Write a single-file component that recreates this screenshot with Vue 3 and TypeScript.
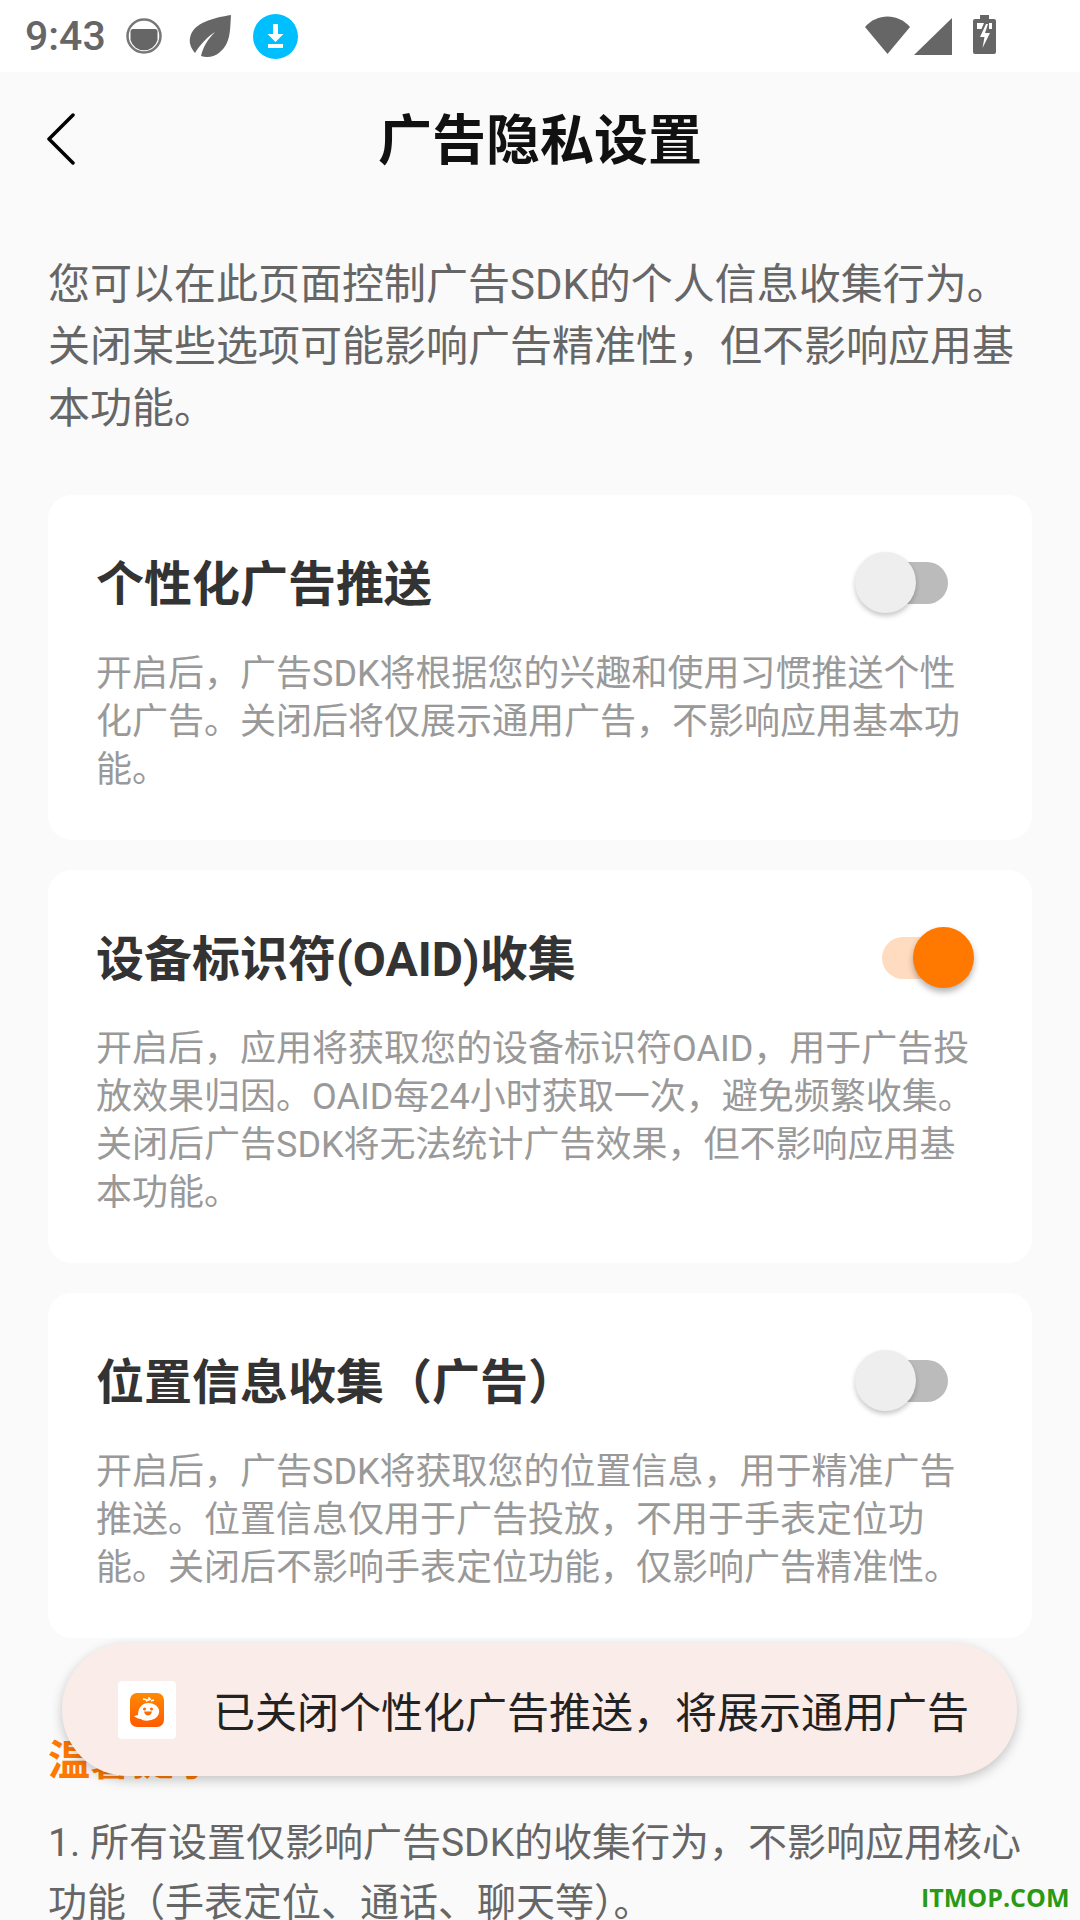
<script setup lang="ts">
import { ref } from "vue";
import type { Ref } from "vue";

interface option {
  readonly id: number;
  readonly title: string;
  readonly desc: string;
  on: boolean;
}

const options: Ref<option[]> = ref([
  {
    id: 1,
    title: "个性化广告推送",
    desc: "开启后，广告SDK将根据您的兴趣和使用习惯推送个性化广告。关闭后将仅展示通用广告，不影响应用基本功能。",
    on: false,
  },
  {
    id: 2,
    title: "设备标识符(OAID)收集",
    desc: "开启后，应用将获取您的设备标识符OAID，用于广告投放效果归因。OAID每24小时获取一次，避免频繁收集。关闭后广告SDK将无法统计广告效果，但不影响应用基本功能。",
    on: true,
  },
  {
    id: 3,
    title: "位置信息收集（广告）",
    desc: "开启后，广告SDK将获取您的位置信息，用于精准广告推送。位置信息仅用于广告投放，不用于手表定位功能。关闭后不影响手表定位功能，仅影响广告精准性。",
    on: false,
  },
]);

function toggle(item: option): void {
  item.on = !item.on;
}
</script>

<template>
  <div class="page">
    <div class="status">
      <span class="time">9:43</span>
      <svg class="ic-round" width="36" height="36" viewBox="0 0 36 36">
        <circle cx="18" cy="18" r="16.500" fill="none" stroke="#777" stroke-width="2.500" />
        <path d="M4.500 13.500q0-2.500 2.500-2.500h22q2.500 0 2.500 2.500V22a14 14 0 0 1-27 0z" fill="#666" />
      </svg>
      <svg class="ic-leaf" width="42" height="43" viewBox="0 0 42 43">
        <path d="M42 0C41 14 42 28 31 37 26 42 18 43 12 41 14 32 19 24 26 17 18 22 11 30 6 38 2 33 0 28 1 23 4 7 25 3 42 0z" fill="#666" />
      </svg>
      <svg class="ic-down" width="45" height="45" viewBox="0 0 45 45">
        <circle cx="22.500" cy="22.500" r="22.500" fill="#00bfff" />
        <path d="M20 10h5v10h5.500L22.500 28l-8-8H20z" fill="#fff" />
        <rect x="15" y="30" width="15" height="4" fill="#fff" />
      </svg>
      <span class="grow"></span>
      <svg class="ic-wifi" width="45" height="38" viewBox="0 0 45 38">
        <path d="M0 11C12 -3 33 -3 45 11L22.500 38z" fill="#666" />
      </svg>
      <svg class="ic-signal" width="38" height="37" viewBox="0 0 38 37">
        <path d="M38 0V37H0z" fill="#666" />
      </svg>
      <svg class="ic-batt" width="23" height="39" viewBox="0 0 23 39">
        <path d="M7 0h9v4h5q2 0 2 2v31q0 2-2 2H2q-2 0-2-2V6q0-2 2-2h5z" fill="#666" />
        <path d="M4 8h7l-2.500 6H4zM16 8h3v6h-3z" fill="#fff" />
        <path d="M13 9 7 22h4.500L9.500 33 17 18h-5l3-9z" fill="#fff" />
      </svg>
    </div>

    <div class="head">
      <svg class="back" width="28" height="52" viewBox="0 0 28 52">
        <path d="M26 2 2 26l24 24" fill="none" stroke="#000" stroke-width="3.500" stroke-linecap="round" stroke-linejoin="round" />
      </svg>
      <h1 class="title">广告隐私设置</h1>
    </div>

    <div class="body">
      <p class="intro">您可以在此页面控制广告SDK的个人信息收集行为。关闭某些选项可能影响广告精准性，但不影响应用基本功能。</p>

      <div class="card" v-for="item in options" :key="item.id">
        <div class="row">
          <span class="card-title">{{ item.title }}</span>
          <div class="switch" :class="{ on: item.on }" @click="toggle(item)">
            <span class="track"></span>
            <span class="thumb"></span>
          </div>
        </div>
        <p class="desc">{{ item.desc }}</p>
      </div>

      <h2 class="tip-title">温馨提示</h2>
      <p class="tip">1. 所有设置仅影响广告SDK的收集行为，不影响应用核心功能（手表定位、通话、聊天等）。</p>
    </div>

    <div class="toast">
      <div class="toast-icon">
        <svg width="34" height="34" viewBox="0 0 34 34">
          <defs>
            <linearGradient id="whale" x1="0" y1="0" x2="0" y2="1">
              <stop offset="0" stop-color="#ff8a00" />
              <stop offset="1" stop-color="#ff5a00" />
            </linearGradient>
          </defs>
          <rect width="34" height="34" rx="7" fill="url(#whale)" />
          <path d="M4 23l4-1c0-7 4-12 10-12 6 0 10 3 11 7 1 5-3 9-8 10-4 1-8 1-10-1-2 0-5-1-7-3z" fill="#fff" />
          <path d="M13 6l5 1M19 4v3M16 8l5-2M21 8l3-1" stroke="#fff" stroke-width="1.500" fill="none" />
          <circle cx="14.500" cy="16" r="1.500" fill="#ff6a00" />
          <circle cx="21.500" cy="16" r="1.500" fill="#ff6a00" />
          <path d="M14 18.500h8q-1 4-4 4t-4-4z" fill="#ff6a00" />
        </svg>
      </div>
      <span class="toast-text">已关闭个性化广告推送，将展示通用广告</span>
    </div>

    <span class="mark">ITMOP.COM</span>
  </div>
</template>

<style>
html,
body {
  margin: 0;
  background: #fafafa;
}
</style>

<style scoped>
.page {
  position: relative;
  width: 1080px;
  height: 1920px;
  overflow: hidden;
  background: #fafafa;
  font-family: Roboto, "Noto Sans CJK SC", sans-serif;
}

.status {
  height: 72px;
  background: #fff;
  display: flex;
  align-items: center;
  box-sizing: border-box;
  padding: 0 84px 0 25px;
}

.time {
  font-size: 41px;
  font-weight: 500;
  color: #666;
  margin-right: 20px;
}

.ic-leaf {
  margin-left: 27px;
}

.ic-down {
  margin-left: 22px;
}

.grow {
  flex: 1;
}

.ic-wifi {
  margin-bottom: 2px;
}

.ic-signal {
  margin-left: 4px;
}

.ic-batt {
  margin-left: 21px;
  margin-bottom: 3px;
}

.head {
  position: relative;
  height: 136px;
  display: flex;
  align-items: center;
  justify-content: center;
}

.back {
  position: absolute;
  left: 47px;
  top: 41px;
}

.title {
  margin: 0;
  padding-bottom: 7px;
  font-size: 54px;
  font-weight: 700;
  color: #111;
}

.body {
  padding: 46px 48px 0;
}

.intro {
  margin: 0 0 55px;
  font-size: 42px;
  line-height: 62px;
  color: #666;
}

.card {
  background: #fff;
  border-radius: 24px;
  padding: 57px 48px 46px;
  margin-bottom: 30px;
}

.row {
  display: flex;
  align-items: center;
  justify-content: space-between;
}

.card-title {
  font-size: 48px;
  line-height: 58px;
  padding-top: 4px;
  font-weight: 700;
  color: #333;
}

.switch {
  position: relative;
  width: 120px;
  height: 62px;
  margin-right: 9px;
  display: flex;
  align-items: center;
  justify-content: center;
}

.track {
  width: 66px;
  height: 42px;
  border-radius: 21px;
  background: #bbb;
}

.thumb {
  position: absolute;
  left: 0;
  top: 0;
  width: 61px;
  height: 61px;
  border-radius: 50%;
  background: #eee;
  box-shadow: 0 3px 5px rgba(0, 0, 0, 0.22);
}

.switch.on .track {
  background: #ffdcc0;
}

.switch.on .thumb {
  left: 58px;
  background: #ff7800;
  box-shadow: 0 4px 6px rgba(0, 0, 0, 0.3);
}

.desc {
  margin: 36px 0 0;
  font-size: 36px;
  line-height: 48px;
  color: #999;
}

.tip-title {
  margin: 88px 0 0;
  font-size: 42px;
  font-weight: 700;
  color: #ff7800;
}

.tip {
  margin: 26px 0 0;
  font-size: 39px;
  line-height: 60px;
  color: #666;
}

.toast {
  position: absolute;
  left: 62px;
  top: 1643px;
  width: 955px;
  height: 133px;
  box-sizing: border-box;
  padding-left: 56px;
  border-radius: 66px;
  background: #faece8;
  box-shadow: 0 4px 12px rgba(0, 0, 0, 0.22);
  display: flex;
  align-items: center;
}

.toast-icon {
  width: 58px;
  height: 58px;
  border-radius: 4px;
  background: #fff;
  display: flex;
  align-items: center;
  justify-content: center;
}

.toast-text {
  margin-left: 37px;
  font-size: 42px;
  color: #222;
}

.mark {
  position: absolute;
  left: 921px;
  top: 1880px;
  font-family: "Open Sans", sans-serif;
  font-size: 25px;
  font-weight: 700;
  line-height: 34px;
  color: #2a9a14;
}
</style>
